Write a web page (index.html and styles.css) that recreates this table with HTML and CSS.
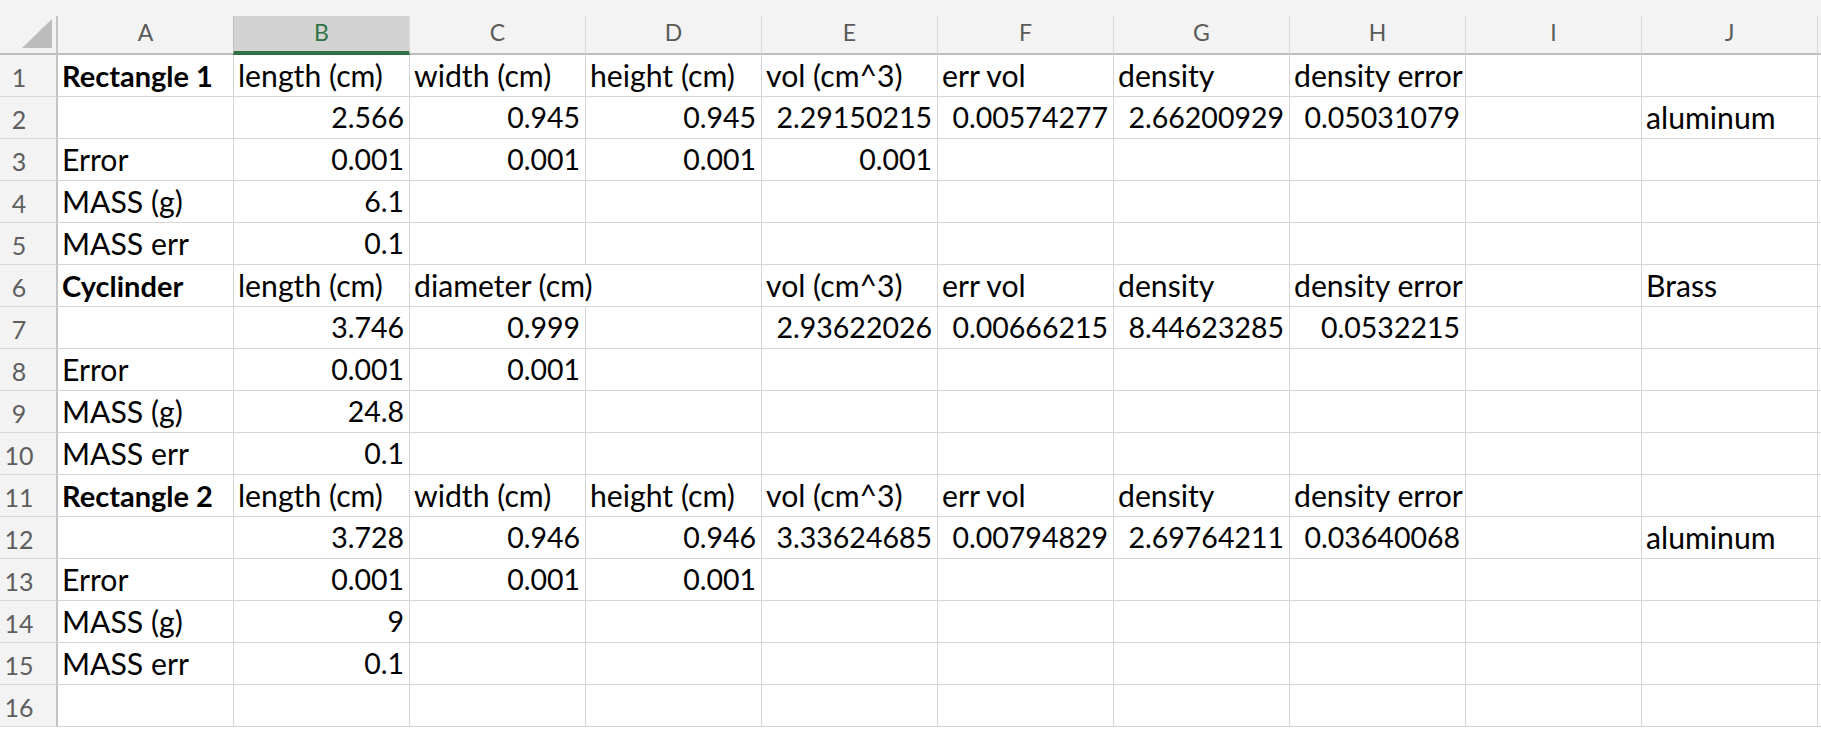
FILE: index.html
```html
<!DOCTYPE html>
<html>
<head>
<meta charset="utf-8">
<link rel="stylesheet" href="styles.css">
</head>
<body>
<div class="sheet">
  <div class="topbar"></div>
  <div class="grid">
    <div class="row">
      <div class="corner"><svg width="58" height="37" viewBox="0 0 58 37"><polygon points="52,3 52,32 22,32" fill="#bcbcbc"/></svg></div>
      <div class="ch">A</div><div class="ch sel">B</div><div class="ch">C</div><div class="ch">D</div><div class="ch">E</div><div class="ch">F</div><div class="ch">G</div><div class="ch">H</div><div class="ch">I</div><div class="ch">J</div><div class="ch last"></div>
    </div>
    <div class="row">
      <div class="rh">1</div><div class="c b">Rectangle 1</div><div class="c">length (cm)</div><div class="c">width (cm)</div><div class="c">height (cm)</div><div class="c">vol (cm^3)</div><div class="c">err vol</div><div class="c">density</div><div class="c">density error</div><div class="c"></div><div class="c"></div><div class="x"></div>
    </div>
    <div class="row">
      <div class="rh">2</div><div class="c"></div><div class="c n">2.566</div><div class="c n">0.945</div><div class="c n">0.945</div><div class="c n">2.29150215</div><div class="c n">0.00574277</div><div class="c n">2.66200929</div><div class="c n">0.05031079</div><div class="c"></div><div class="c">aluminum</div><div class="x"></div>
    </div>
    <div class="row">
      <div class="rh">3</div><div class="c">Error</div><div class="c n">0.001</div><div class="c n">0.001</div><div class="c n">0.001</div><div class="c n">0.001</div><div class="c"></div><div class="c"></div><div class="c"></div><div class="c"></div><div class="c"></div><div class="x"></div>
    </div>
    <div class="row">
      <div class="rh">4</div><div class="c">MASS (g)</div><div class="c n">6.1</div><div class="c"></div><div class="c"></div><div class="c"></div><div class="c"></div><div class="c"></div><div class="c"></div><div class="c"></div><div class="c"></div><div class="x"></div>
    </div>
    <div class="row">
      <div class="rh">5</div><div class="c">MASS err</div><div class="c n">0.1</div><div class="c"></div><div class="c"></div><div class="c"></div><div class="c"></div><div class="c"></div><div class="c"></div><div class="c"></div><div class="c"></div><div class="x"></div>
    </div>
    <div class="row">
      <div class="rh">6</div><div class="c b">Cyclinder</div><div class="c">length (cm)</div><div class="c spill">diameter (cm)</div><div class="c"></div><div class="c">vol (cm^3)</div><div class="c">err vol</div><div class="c">density</div><div class="c">density error</div><div class="c"></div><div class="c">Brass</div><div class="x"></div>
    </div>
    <div class="row">
      <div class="rh">7</div><div class="c"></div><div class="c n">3.746</div><div class="c n">0.999</div><div class="c"></div><div class="c n">2.93622026</div><div class="c n">0.00666215</div><div class="c n">8.44623285</div><div class="c n">0.0532215</div><div class="c"></div><div class="c"></div><div class="x"></div>
    </div>
    <div class="row">
      <div class="rh">8</div><div class="c">Error</div><div class="c n">0.001</div><div class="c n">0.001</div><div class="c"></div><div class="c"></div><div class="c"></div><div class="c"></div><div class="c"></div><div class="c"></div><div class="c"></div><div class="x"></div>
    </div>
    <div class="row">
      <div class="rh">9</div><div class="c">MASS (g)</div><div class="c n">24.8</div><div class="c"></div><div class="c"></div><div class="c"></div><div class="c"></div><div class="c"></div><div class="c"></div><div class="c"></div><div class="c"></div><div class="x"></div>
    </div>
    <div class="row">
      <div class="rh">10</div><div class="c">MASS err</div><div class="c n">0.1</div><div class="c"></div><div class="c"></div><div class="c"></div><div class="c"></div><div class="c"></div><div class="c"></div><div class="c"></div><div class="c"></div><div class="x"></div>
    </div>
    <div class="row">
      <div class="rh">11</div><div class="c b">Rectangle 2</div><div class="c">length (cm)</div><div class="c">width (cm)</div><div class="c">height (cm)</div><div class="c">vol (cm^3)</div><div class="c">err vol</div><div class="c">density</div><div class="c">density error</div><div class="c"></div><div class="c"></div><div class="x"></div>
    </div>
    <div class="row">
      <div class="rh">12</div><div class="c"></div><div class="c n">3.728</div><div class="c n">0.946</div><div class="c n">0.946</div><div class="c n">3.33624685</div><div class="c n">0.00794829</div><div class="c n">2.69764211</div><div class="c n">0.03640068</div><div class="c"></div><div class="c">aluminum</div><div class="x"></div>
    </div>
    <div class="row">
      <div class="rh">13</div><div class="c">Error</div><div class="c n">0.001</div><div class="c n">0.001</div><div class="c n">0.001</div><div class="c"></div><div class="c"></div><div class="c"></div><div class="c"></div><div class="c"></div><div class="c"></div><div class="x"></div>
    </div>
    <div class="row">
      <div class="rh">14</div><div class="c">MASS (g)</div><div class="c n">9</div><div class="c"></div><div class="c"></div><div class="c"></div><div class="c"></div><div class="c"></div><div class="c"></div><div class="c"></div><div class="c"></div><div class="x"></div>
    </div>
    <div class="row">
      <div class="rh">15</div><div class="c">MASS err</div><div class="c n">0.1</div><div class="c"></div><div class="c"></div><div class="c"></div><div class="c"></div><div class="c"></div><div class="c"></div><div class="c"></div><div class="c"></div><div class="x"></div>
    </div>
    <div class="row">
      <div class="rh">16</div><div class="c"></div><div class="c"></div><div class="c"></div><div class="c"></div><div class="c"></div><div class="c"></div><div class="c"></div><div class="c"></div><div class="c"></div><div class="c"></div><div class="x"></div>
    </div>
  </div>
</div>
</body>
</html>
```
FILE: styles.css
```css
html, body {
  margin: 0;
  padding: 0;
  background: #ffffff;
}
.sheet {
  width: 1821px;
  height: 729px;
  overflow: hidden;
  font-family: Lato, "Open Sans", sans-serif;
}
.topbar {
  height: 16px;
  background: #f3f3f3;
}
.grid {
  display: grid;
  grid-template-columns: 58px repeat(10, 176px) 1fr;
  grid-template-rows: 39px repeat(16, 42px);
}
.row {
  display: contents;
}
.corner {
  background: #f3f3f3;
  border-right: 2px solid #c4c4c4;
  border-bottom: 2px solid #bfbfbf;
  box-sizing: border-box;
  overflow: hidden;
}
.corner svg {
  display: block;
}
.ch {
  background: #f3f3f3;
  border-right: 1px solid #dadada;
  border-bottom: 2px solid #bfbfbf;
  box-sizing: border-box;
  text-align: center;
  font-size: 23px;
  line-height: 33px;
  color: #5a5a5a;
}
.ch.sel {
  background: #d3d3d3;
  color: #2f7446;
  border-left: 1px solid #bdbdbd;
  margin-left: -1px;
  border-bottom: 4px solid #317245;
}
.ch.last {
  border-right: none;
}
.rh {
  background: #f3f3f3;
  border-right: 2px solid #c4c4c4;
  border-bottom: 1px solid #dadada;
  box-sizing: border-box;
  text-align: center;
  padding-right: 18px;
  font-size: 25px;
  line-height: 45px;
  color: #5e5e5e;
  overflow: hidden;
}
.c {
  border-right: 1px solid #d5d5d5;
  border-bottom: 1px solid #d5d5d5;
  box-sizing: border-box;
  font-size: 30.2px;
  line-height: 41px;
  padding: 0 5px 0 4px;
  white-space: nowrap;
  overflow: hidden;
  color: #000000;
}
.c.n {
  text-align: right;
  font-size: 28.5px;
}
.c.b {
  font-weight: 700;
  font-size: 29px;
}
.c.spill {
  overflow: visible;
  border-right-color: transparent;
  position: relative;
  z-index: 1;
}
.x {
  border-bottom: 1px solid #d5d5d5;
}
```
